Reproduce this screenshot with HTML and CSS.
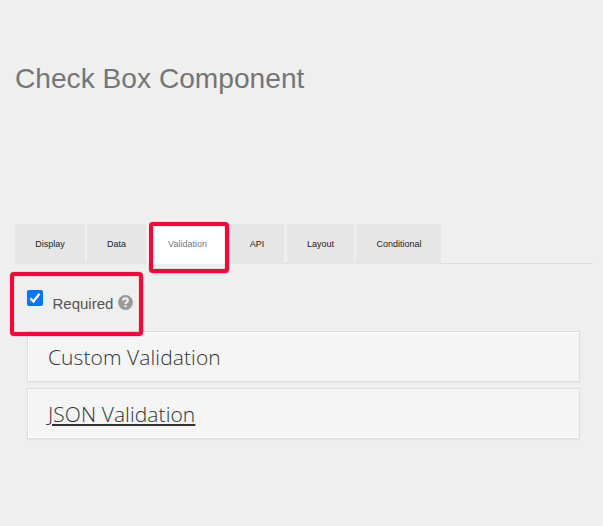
FILE: index.html
```html
<!DOCTYPE html>
<html lang="en">
<head>
<meta charset="utf-8">
<title>Check Box Component</title>
<link rel="stylesheet" href="styles.css">
</head>
<body>
<main class="dialog">
  <h1 class="title">Check Box Component</h1>
  <nav class="tabs">
    <a class="tab display">Display</a>
    <a class="tab data">Data</a>
    <a class="tab active"><span>Validation</span><i class="highlight"></i></a>
    <a class="tab api">API</a>
    <a class="tab layout">Layout</a>
    <a class="tab conditional">Conditional</a>
  </nav>
  <section class="content">
    <div class="required">
      <svg class="check" viewBox="0 0 16 16"><rect width="16" height="16" rx="2" fill="#0075ff"/><path d="M3.4 8.4 6.4 11.4 12.5 3.7" fill="none" stroke="#fff" stroke-width="2.3"/></svg>
      <span class="label">Required</span>
      <svg class="help" viewBox="0 0 15 15"><circle cx="7.5" cy="7.5" r="7.4" fill="#999"/><path d="M5 5.5C5.2 2.7 9.8 2.7 9.8 5.5C9.8 7.2 7.5 7 7.5 9" fill="none" stroke="#efefef" stroke-width="2.2"/><path d="M6.4 10.1h2.2v2H6.4z" fill="#efefef"/></svg>
      <i class="highlight"></i>
    </div>
    <div class="panel custom"><span>Custom Validation</span></div>
    <div class="panel json"><span class="link">JSON Validation</span></div>
  </section>
</main>
</body>
</html>
```
FILE: styles.css
```css
* { box-sizing: border-box; }
body {
  margin: 0;
  background: #efefef;
  font-family: "Liberation Sans", Arial, sans-serif;
}
.dialog { height: 526px; padding: 62px 10px 0 15px; }
.title {
  margin: 0;
  height: 162px;
  font-size: 28.15px;
  line-height: 33px;
  font-weight: 400;
  color: #757575;
  white-space: nowrap;
}
.tabs {
  display: flex;
  gap: 2px;
  height: 40px;
  border-bottom: 1px solid #ddd;
}
.tab {
  height: 40px;
  background: #e6e6e6;
  color: #222;
  font-size: 9px;
  line-height: 40px;
  text-align: center;
}
.display { width: 70px; }
.data { width: 59px; }
.active { position: relative; width: 80px; padding-right: 1px; background: #fff; color: #777; }
.api { width: 56px; margin-left: -2px; padding-left: 2px; }
.layout { width: 67px; margin-left: 1px; }
.conditional { width: 85px; padding-left: 1px; }
.highlight {
  position: absolute;
  z-index: 2;
  border: 4px solid #ff0038;
  border-radius: 4px;
  box-shadow: 0 0 1px #555, inset 0 0 1px #555;
}
.active .highlight { inset: -2px -1px -9px 1px; }
.content { padding: 26px 13px 0 12px; }
.required {
  position: relative;
  display: flex;
  align-items: flex-start;
  height: 41px;
}
.check { width: 16px; height: 16px; }
.label {
  margin: 4px 0 0 9.5px;
  font-size: 15px;
  line-height: 20px;
  color: #555;
}
.help { width: 15px; height: 15px; margin: 5px 0 0 4.5px; }
.required .highlight { left: -17px; top: -18px; width: 133px; height: 64px; }
.panel {
  height: 51px;
  padding-left: 20px;
  border: 1px solid #ddd;
  background: #f5f5f5;
  font: 300 21px/50px "Open Sans", sans-serif;
  letter-spacing: 0.08px;
  color: #333;
}
.custom { margin-bottom: 6px; box-shadow: inset 0 1px #fff, inset 1px 0 #fff, 0 1px 1px #e5e5e5; }
.json { box-shadow: inset 0 -1px #fff, inset 1px 0 #fff, 0 1px 1px #e5e5e5; }
.link {
  text-decoration: underline;
  text-decoration-thickness: 2px;
  text-underline-offset: 2px;
}
```
